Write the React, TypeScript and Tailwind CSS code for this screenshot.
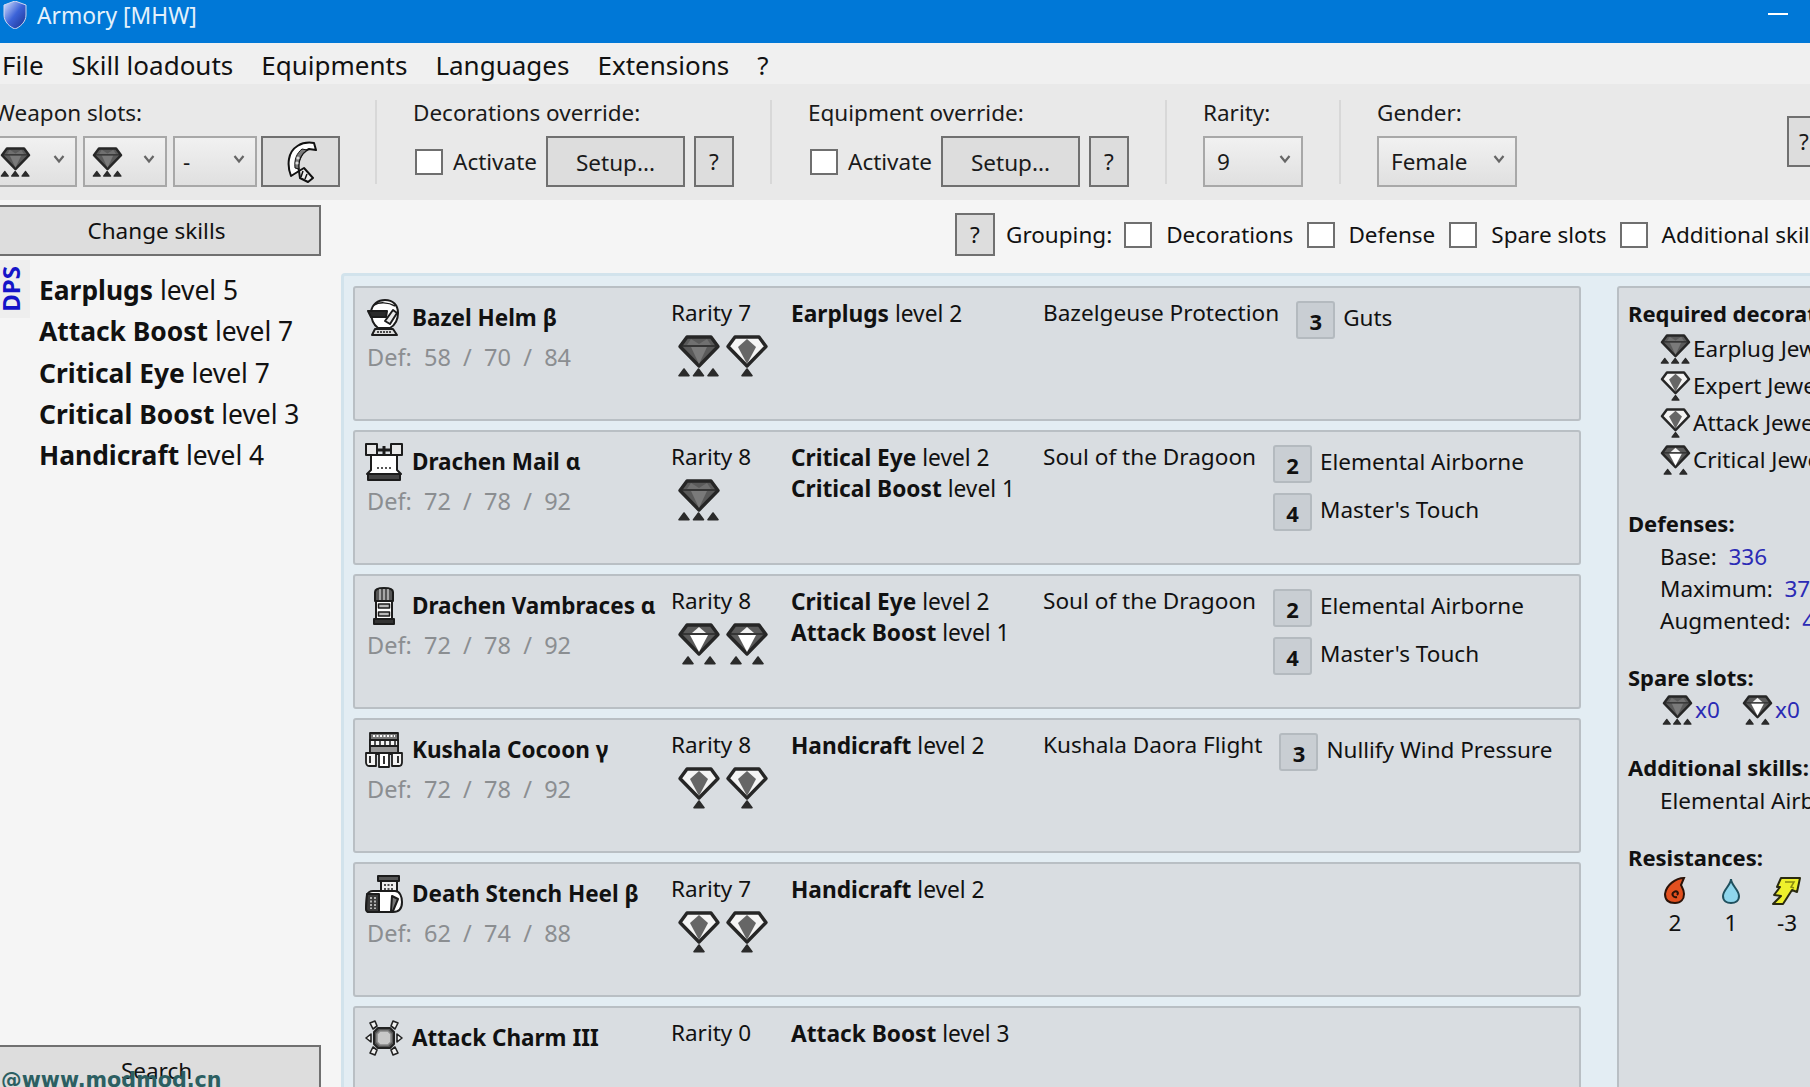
import React from "react";

function Gem({ level, slots, className = "w-[46px] h-[42px]" }: { level: number; slots?: number; className?: string }) {
  const s = slots ?? level;
  const xs = s === 3 ? [8, 22.5, 37] : s === 2 ? [12, 34] : [23];
  return (
    <svg viewBox="0 0 46 42" className={`shrink-0 ${className}`}>
      <path d="M11 2H35L42 11.5L23 31L4 11.5Z" fill={level === 1 ? "#f4f4f4" : "#5a5a5a"} stroke="#262626" strokeWidth="3.4" strokeLinejoin="round" />
      {level === 3 && <path d="M15 12L23 29L31 12Z" fill="#7a7a7a" />}
      {level === 3 && <path d="M15 4L11 10H35L31 4L23 9Z" fill="#707070" />}
      {level === 2 && <path d="M14 12L23 29L32 12Z" fill="#fff" />}
      {level === 2 && <path d="M23 4L16 10H30Z" fill="#f2f2f2" />}
      {level === 1 && <path d="M23 4L14 12L23 29L32 12Z" fill="#666" />}
      {level !== 1 && <path d="M5 11H41" stroke="#2a2a2a" strokeWidth="1.5" />}
      {xs.map((x) => (
        <path key={x} d={`M${x} 34L${x + 5} 40.7H${x - 5}Z`} fill="#2b2b2b" stroke="#2b2b2b" strokeWidth="1.6" strokeLinejoin="round" />
      ))}
    </svg>
  );
}

function HelmIcon() {
  return (
    <svg viewBox="0 0 36 38" className="w-[36px] h-[38px] shrink-0" fill="#fff" stroke="#1c1c1c" strokeWidth="2" strokeLinejoin="round">
      <path d="M5 13C6 5 12 1 19 1C27 1 32 6 32 14C32 20 29 26 24 29H12C8 26 5 20 5 13Z" />
      <path d="M8 6C13 3 22 3 29 7" fill="none" strokeWidth="1.5" />
      <path d="M2 12H21L20 18H5Z" fill="#2a2a2a" />
      <path d="M19 22L27 11L31 14L24 25Z" fill="#e8e8e8" />
      <path d="M9 30H27L31 36H6Z" fill="#ddd" />
      <path d="M11 33H26" strokeWidth="1.5" strokeDasharray="2 1" />
    </svg>
  );
}

function ChestIcon() {
  return (
    <svg viewBox="0 0 38 38" className="w-[38px] h-[38px] shrink-0" fill="#fff" stroke="#1c1c1c" strokeWidth="2" strokeLinejoin="round">
      <path d="M1 1H12V12H1Z" fill="#e8e8e8" />
      <path d="M26 1H37V12H26Z" fill="#e8e8e8" />
      <path d="M12 7H26" strokeWidth="3" />
      <path d="M19 3V11" strokeWidth="3" />
      <path d="M6 12H32V27L36 31H2L6 27Z" />
      <path d="M3 31H35V37H3Z" fill="#444" />
      <path d="M12 25H26" strokeWidth="1.5" strokeDasharray="2 2" />
    </svg>
  );
}

function GloveIcon() {
  return (
    <svg viewBox="0 0 24 38" className="w-[24px] h-[38px] shrink-0" fill="#fff" stroke="#1c1c1c" strokeWidth="2" strokeLinejoin="round">
      <path d="M3 5C3 2 7 1 12 1C17 1 21 2 21 5V14H3Z" fill="#555" />
      <path d="M8 2V13M12 2V13M16 2V13" stroke="#ddd" strokeWidth="1.2" />
      <path d="M4 14H20V32H4Z" />
      <path d="M6.5 17H17.5V21H6.5ZM6.5 25H17.5V29H6.5Z" fill="#bbb" strokeWidth="1.5" />
      <path d="M2 32H22V37H2Z" fill="#333" />
    </svg>
  );
}

function WaistIcon() {
  return (
    <svg viewBox="0 0 38 36" className="w-[38px] h-[36px] shrink-0" fill="#eee" stroke="#1c1c1c" strokeWidth="1.8" strokeLinejoin="round">
      <path d="M5 1H33V22H5Z" fill="#777" />
      <path d="M8 4H30" stroke="#fff" strokeWidth="2" strokeDasharray="2 1.5" />
      <path d="M5 8H33V14H5Z" fill="#f4f4f4" />
      <path d="M10 8V14M15 8V14M20 8V14M25 8V14M30 8V14" strokeWidth="1.5" />
      <path d="M5 14H33V21H5Z" fill="#999" />
      <path d="M1 21H11V34H4C2 34 1 32 1 30Z" fill="#f4f4f4" />
      <path d="M37 21H27V34H34C36 34 37 32 37 30Z" fill="#f4f4f4" />
      <path d="M14 21H24V35H14Z" fill="#fff" />
      <path d="M19 24V32M5 24V31M33 24V31" />
    </svg>
  );
}

function FeetIcon() {
  return (
    <svg viewBox="0 0 38 38" className="w-[38px] h-[38px] shrink-0" fill="#fff" stroke="#1c1c1c" strokeWidth="2" strokeLinejoin="round">
      <path d="M13 1H34V6H13Z" fill="#555" />
      <path d="M16 6H32V19H16Z" fill="#eee" />
      <path d="M19 10H29M19 14H29" strokeWidth="1.5" strokeDasharray="2 1.5" />
      <path d="M2 20C2 18 5 16 8 16H30C35 16 37 22 37 27C37 33 34 37 28 37H4C2 37 1 35 1 33Z" />
      <path d="M2 19H14V37H4C2 37 1 35 1 33Z" fill="#3a3a3a" />
      <path d="M6 22V34M10 22V34" stroke="#ddd" strokeWidth="1.5" strokeDasharray="2 1.5" />
      <path d="M27 21L33 24L28 36H26Z" fill="#777" />
    </svg>
  );
}

function CharmIcon() {
  return (
    <svg viewBox="0 0 38 36" className="w-[38px] h-[36px] shrink-0" fill="#f2f2f2" stroke="#222" strokeWidth="1.6" strokeLinejoin="round">
      <path d="M13 8H25L29 12V24L25 28H13L9 24V12Z" fill="#555" strokeWidth="2" />
      <path d="M15 11H23L26 14V22L23 25H15L12 22V14Z" fill="#c8c8c8" stroke="#888" />
      <path d="M5 3L10 1L12 6L8 9Z" />
      <path d="M33 3L28 1L26 6L30 9Z" />
      <path d="M1 18L6 14V22Z" />
      <path d="M37 18L32 14V22Z" />
      <path d="M5 33L10 35L12 30L8 27Z" />
      <path d="M33 33L28 35L26 30L30 27Z" />
    </svg>
  );
}

function Chevron() {
  return (
    <svg viewBox="0 0 12 10" className="w-[12px] h-[10px] shrink-0">
      <path d="M1.5 2L6 7.5L10.5 2" fill="none" stroke="#666" strokeWidth="2.2" />
    </svg>
  );
}

function Combo({ w, children, pl = "pl-[12px]" }: { w: string; children: React.ReactNode; pl?: string }) {
  return (
    <div className={`${w} ${pl} h-[51px] shrink-0 flex items-center justify-between pr-[10px] border-2 border-[#a8a8a8] bg-gradient-to-b from-[#f1f1f1] to-[#e0e0e0]`}>
      {children}
      <div className="-mt-[6px]">
        <Chevron />
      </div>
    </div>
  );
}

function Btn({ w, h = "h-[51px]", className = "", children }: { w: string; h?: string; className?: string; children: React.ReactNode }) {
  return (
    <div className={`${w} ${h} ${className} shrink-0 flex items-center justify-center border-2 border-[#707070] bg-[#dddddd]`}>
      {children}
    </div>
  );
}

function Check({ className = "" }: { className?: string }) {
  return <div className={`w-[28px] h-[26px] shrink-0 border-2 border-[#6f6f6f] bg-white ${className}`} />;
}

function Sep() {
  return <div className="w-[2px] h-[84px] mt-[16px] bg-[#d8d8d8] shrink-0" />;
}

function Badge({ n }: { n: number }) {
  return (
    <div className="w-[39px] h-[38px] shrink-0 flex items-center justify-center rounded-[3px] border-2 border-[#b4babf] bg-[#c9ced3] font-bold text-[22px] pt-[2px]">
      {n}
    </div>
  );
}

type Piece = {
  icon: React.ReactNode;
  name: string;
  def?: [number, number, number];
  rarity: number;
  gems: [number, number?][];
  skills: [string, number][];
  set?: string;
  bonus: [number, string][];
};

const pieces: Piece[] = [
  { icon: <HelmIcon />, name: "Bazel Helm β", def: [58, 70, 84], rarity: 7, gems: [[3], [1]], skills: [["Earplugs", 2]], set: "Bazelgeuse Protection", bonus: [[3, "Guts"]] },
  { icon: <ChestIcon />, name: "Drachen Mail α", def: [72, 78, 92], rarity: 8, gems: [[3]], skills: [["Critical Eye", 2], ["Critical Boost", 1]], set: "Soul of the Dragoon", bonus: [[2, "Elemental Airborne"], [4, "Master's Touch"]] },
  { icon: <GloveIcon />, name: "Drachen Vambraces α", def: [72, 78, 92], rarity: 8, gems: [[2], [2]], skills: [["Critical Eye", 2], ["Attack Boost", 1]], set: "Soul of the Dragoon", bonus: [[2, "Elemental Airborne"], [4, "Master's Touch"]] },
  { icon: <WaistIcon />, name: "Kushala Cocoon γ", def: [72, 78, 92], rarity: 8, gems: [[1], [1]], skills: [["Handicraft", 2]], set: "Kushala Daora Flight", bonus: [[3, "Nullify Wind Pressure"]] },
  { icon: <FeetIcon />, name: "Death Stench Heel β", def: [62, 74, 88], rarity: 7, gems: [[1], [1]], skills: [["Handicraft", 2]], bonus: [] },
  { icon: <CharmIcon />, name: "Attack Charm III", rarity: 0, gems: [], skills: [["Attack Boost", 3]], bonus: [] },
];

function Card({ p }: { p: Piece }) {
  return (
    <div className="w-[1228px] h-[135px] shrink-0 flex border-2 border-[#b9bfc4] rounded-[3px] bg-[#d9dde1] text-[#111]">
      <div className="w-[316px] shrink-0 pl-[10px] pt-[10px]">
        <div className="flex items-center h-[40px]">
          <div className="w-[47px] flex justify-center pr-[9px]">{p.icon}</div>
          <span className="font-bold text-[22.5px] whitespace-nowrap">{p.name}</span>
        </div>
        {p.def && (
          <div className="ml-[2px] mt-[3px] text-[23.5px] leading-[32px] text-[#8b8e91] whitespace-pre">
            {`Def:  ${p.def[0]}  /  ${p.def[1]}  /  ${p.def[2]}`}
          </div>
        )}
      </div>
      <div className="w-[120px] shrink-0 pt-[9px]">
        <div className="text-[22.5px] leading-[32px]">Rarity {p.rarity}</div>
        <div className="flex gap-[2px] ml-[5px] mt-[6px]">
          {p.gems.map((g, i) => (
            <Gem key={i} level={g[0]} />
          ))}
        </div>
      </div>
      <div className="w-[252px] shrink-0 pt-[10px] text-[22.7px] leading-[31px]">
        {p.skills.map(([n, l]) => (
          <div key={n} className="whitespace-nowrap">
            <b>{n}</b> level {l}
          </div>
        ))}
      </div>
      <div className="flex pt-[9px]">
        {p.set && <div className="text-[22.6px] leading-[32px] whitespace-nowrap mr-[17px]">{p.set}</div>}
        <div className="flex flex-col gap-[10px] pt-[4px]">
          {p.bonus.map(([n, t]) => (
            <div key={t} className="flex items-center gap-[8px] text-[22.5px] whitespace-nowrap">
              <Badge n={n} />
              <span className="-mt-[5px]">{t}</span>
            </div>
          ))}
        </div>
      </div>
    </div>
  );
}

function Heading({ children, className = "" }: { children: React.ReactNode; className?: string }) {
  return <div className={`h-[30px] leading-[30px] font-bold text-[22px] whitespace-nowrap ${className}`}>{children}</div>;
}

function Summary() {
  const jewels: [number, number, string][] = [
    [3, 3, "Earplug Jewel 4"],
    [1, 1, "Expert Jewel 1"],
    [1, 1, "Attack Jewel 1"],
    [2, 2, "Critical Jewel 2"],
  ];
  return (
    <div className="w-[400px] h-[900px] shrink-0 ml-[36px] pl-[9px] pt-[10px] border-2 border-[#b9bfc4] rounded-[3px] bg-[#d9dde1] text-[22.5px] text-[#111]">
      <Heading>Required decorations:</Heading>
      <div className="mt-[2px] pl-[31px]">
        {jewels.map(([l, s, t]) => (
          <div key={t} className="h-[37px] flex items-center gap-[1px] whitespace-nowrap">
            <Gem level={l} slots={s} className="w-[33px] h-[30px]" />
            {t}
          </div>
        ))}
      </div>
      <Heading className="mt-[30px]">Defenses:</Heading>
      <div className="mt-[3px] pl-[32px] leading-[32px] whitespace-pre">
        <div>
          Base:  <span className="text-[#2b2bb5]">336</span>
        </div>
        <div>
          Maximum:  <span className="text-[#2b2bb5]">378</span>
        </div>
        <div>
          Augmented:  <span className="text-[#2b2bb5]">448</span>
        </div>
      </div>
      <Heading className="mt-[25px]">Spare slots:</Heading>
      <div className="h-[36px] pl-[33px] flex items-center text-[#2b2bb5]">
        <Gem level={3} className="w-[33px] h-[30px]" />
        <span className="ml-[1px] w-[46px]">x0</span>
        <Gem level={2} className="w-[33px] h-[30px]" />
        <span className="ml-[1px]">x0</span>
      </div>
      <Heading className="mt-[24px]">Additional skills:</Heading>
      <div className="h-[34px] mt-[2px] pl-[32px] leading-[34px] whitespace-nowrap">Elemental Airborne</div>
      <Heading className="mt-[24px]">Resistances:</Heading>
      <div className="flex ml-[19px] mt-[1px]">
        {[
          { v: "2", i: (
            <svg viewBox="0 0 24 28" className="w-[24px] h-[28px]">
              <path d="M21 1C13 1 3 8 2 17C2 23 6 26 12 26C18 26 21 22 21 17C21 13 19 10 18 8Z" fill="#e2501f" stroke="#2a1208" strokeWidth="2" />
              <path d="M14 20C10 21 8 17 11 15C14 13 16 16 14 18" fill="none" stroke="#2a1208" strokeWidth="2" />
            </svg>
          ) },
          { v: "1", i: (
            <svg viewBox="0 0 24 28" className="w-[24px] h-[28px]">
              <path d="M12 2C12 8 4 13 4 19C4 24 8 26 12 26C16 26 20 24 20 19C20 13 12 8 12 2Z" fill="#8fd6ec" stroke="#20505e" strokeWidth="2" />
            </svg>
          ) },
          { v: "-3", i: (
            <svg viewBox="0 0 30 30" className="w-[30px] h-[30px]">
              <path d="M9 2H28L25 16L20 14L11 28L1 28L9 20L2 19L8 11H5Z" fill="#eef02c" stroke="#2a2a10" strokeWidth="2" strokeLinejoin="round" />
              <path d="M13 6H22L19 11L22 12" fill="none" stroke="#8a8a10" strokeWidth="1.5" />
            </svg>
          ) },
        ].map((r) => (
          <div key={r.v} className="w-[56px] flex flex-col items-center">
            <div className="h-[35px] flex items-center">{r.i}</div>
            <div className="h-[30px] leading-[30px]">{r.v}</div>
          </div>
        ))}
      </div>
    </div>
  );
}

export default function App() {
  return (
    <div className="relative w-[1810px] h-[1087px] overflow-hidden flex flex-col font-['Noto_Sans',sans-serif] text-[22.5px] text-[#111] bg-[#f5f5f5]">
      {/* title bar */}
      <div className="h-[43px] shrink-0 flex items-center bg-[#0078d7] text-[#e4f1fb]">
        <svg viewBox="0 0 24 28" className="w-[24px] h-[28px] ml-[3px] -mt-[13px] shrink-0">
          <defs>
            <linearGradient id="sh" x1="0" y1="0" x2="1" y2="1">
              <stop offset="0" stopColor="#dfe8ff" />
              <stop offset="0.5" stopColor="#3c63d8" />
              <stop offset="1" stopColor="#1a2f8c" />
            </linearGradient>
          </defs>
          <path d="M12 0L23 4V14C23 21 17 26 12 28C7 26 1 21 1 14V4Z" fill="url(#sh)" stroke="#cfd8f0" />
        </svg>
        <span className="ml-[10px] -mt-[11px] text-[22.8px]">Armory [MHW]</span>
        <div className="ml-auto mr-[22px] -mt-[15px] w-[20px] h-[2px] bg-white" />
      </div>

      {/* menu */}
      <div className="h-[41px] shrink-0 flex items-center bg-[#f0f0f0] pl-[2px] pt-[3px] gap-[28px] text-[26px]">
        <span>File</span>
        <span>Skill loadouts</span>
        <span>Equipments</span>
        <span>Languages</span>
        <span>Extensions</span>
        <span>?</span>
      </div>

      {/* toolbar */}
      <div className="h-[116px] shrink-0 flex bg-[#e9e9e9] text-[#1a1a1a] -ml-[8px] w-[1818px]">
        <div className="pt-[13px] w-[348px] shrink-0">
          <div className="h-[39px] leading-[32px] pl-[2px]">Weapon slots:</div>
          <div className="flex gap-[6px]">
            <Combo w="w-[85px]" pl="pl-[5px]"><Gem level={3} className="w-[33px] h-[30px]" /></Combo>
            <Combo w="w-[84px]" pl="pl-[6px]"><Gem level={3} className="w-[33px] h-[30px]" /></Combo>
            <Combo w="w-[84px]" pl="pl-[8px]">-</Combo>
            <Btn w="w-[79px]" className="-ml-[2px]">
              <svg viewBox="0 0 32 42" className="w-[32px] h-[42px]">
                <path d="M29 2C17 0 6 6 4 18C3 24 4 30 6 35L14 30C12 22 15 12 24 8L31 9Z" fill="#fff" stroke="#111" strokeWidth="2" strokeLinejoin="round" />
                <path d="M17 8C12 12 9 18 10 27L14 28C13 20 16 13 22 9Z" fill="#7a7a7a" stroke="#111" />
                <circle cx="13" cy="17" r="1.6" fill="#ddd" />
                <circle cx="12" cy="22" r="1.6" fill="#ddd" />
                <path d="M14 30L19 27L28 37L23 41L15 37Z" fill="#eee" stroke="#111" strokeWidth="2" strokeLinejoin="round" />
                <path d="M18 30L16 36M22 33L20 38" stroke="#111" strokeWidth="1.5" />
              </svg>
            </Btn>
          </div>
        </div>
        <div className="ml-[35px]"><Sep /></div>
        <div className="ml-[36px] pt-[13px] w-[321px] shrink-0">
          <div className="h-[39px] leading-[32px]">Decorations override:</div>
          <div className="flex items-center">
            <Check className="ml-[2px]" />
            <span className="ml-[10px] w-[93px]">Activate</span>
            <Btn w="w-[139px]" className="pt-[2px]">Setup...</Btn>
            <Btn w="w-[40px]" className="ml-[9px]">?</Btn>
          </div>
        </div>
        <div className="ml-[36px]"><Sep /></div>
        <div className="ml-[36px] pt-[13px] w-[321px] shrink-0">
          <div className="h-[39px] leading-[32px]">Equipment override:</div>
          <div className="flex items-center">
            <Check className="ml-[2px]" />
            <span className="ml-[10px] w-[93px]">Activate</span>
            <Btn w="w-[139px]" className="pt-[2px]">Setup...</Btn>
            <Btn w="w-[40px]" className="ml-[9px]">?</Btn>
          </div>
        </div>
        <div className="ml-[36px]"><Sep /></div>
        <div className="ml-[36px] pt-[13px] w-[100px] shrink-0">
          <div className="h-[39px] leading-[32px]">Rarity:</div>
          <Combo w="w-[100px]">9</Combo>
        </div>
        <div className="ml-[36px]"><Sep /></div>
        <div className="ml-[36px] pt-[13px] w-[140px] shrink-0">
          <div className="h-[39px] leading-[32px]">Gender:</div>
          <Combo w="w-[140px]">Female</Combo>
        </div>
        <Btn w="w-[40px]" className="ml-[270px] mt-[32px] justify-start pl-[10px]">?</Btn>
      </div>

      {/* body */}
      <div className="flex-1 min-h-0 flex overflow-hidden">
        <div className="w-[321px] shrink-0 h-[896px] flex flex-col">
          <Btn w="w-[329px]" className="-ml-[8px] mt-[5px]">Change skills</Btn>
          <div className="flex mt-[4px]">
            <div className="w-[30px] h-[58px] flex items-center justify-center bg-[#eeeeee]">
              <span className="[writing-mode:vertical-rl] rotate-180 font-bold text-[24px] text-[#1414c8] -ml-[9px]">DPS</span>
            </div>
            <div className="ml-[9px] mt-[10px] text-[26.4px] leading-[41.3px]">
              <div><b>Earplugs</b> level 5</div>
              <div><b>Attack Boost</b> level 7</div>
              <div><b>Critical Eye</b> level 7</div>
              <div><b>Critical Boost</b> level 3</div>
              <div><b>Handicraft</b> level 4</div>
            </div>
          </div>
          <Btn w="w-[329px]" className="-ml-[8px] mt-auto shrink-0">Search</Btn>
        </div>
        <div className="ml-[20px] w-[1469px] shrink-0 flex flex-col min-h-0">
          <div className="h-[73px] shrink-0 flex items-center pl-[614px] pb-[4px]">
            <Btn w="w-[40px]" h="h-[43px]">?</Btn>
            <span className="ml-[11px] whitespace-nowrap">Grouping:</span>
            <Check className="ml-[12px]" />
            <span className="ml-[14px] whitespace-nowrap">Decorations</span>
            <Check className="ml-[14px]" />
            <span className="ml-[13px] whitespace-nowrap">Defense</span>
            <Check className="ml-[14px]" />
            <span className="ml-[14px] whitespace-nowrap">Spare slots</span>
            <Check className="ml-[13px]" />
            <span className="ml-[14px] whitespace-nowrap">Additional skills</span>
          </div>
          <div className="flex-1 min-h-0 flex overflow-hidden border-t-[3px] border-l-[3px] border-[#d2e3ec] rounded-tl-[4px] bg-[#e3edf3] pl-[9px] pt-[10px]">
            <div className="flex flex-col gap-[9px] shrink-0">
              {pieces.map((p) => (
                <Card key={p.name} p={p} />
              ))}
            </div>
            <Summary />
          </div>
        </div>
      </div>

      {/* watermark over the search button */}
      <div className="absolute left-[1px] bottom-[-7px] font-['DejaVu_Sans',sans-serif] font-bold text-[20.7px] leading-[28px] text-[#2c5f62]">
        @www.modmod.cn
      </div>
    </div>
  );
}
